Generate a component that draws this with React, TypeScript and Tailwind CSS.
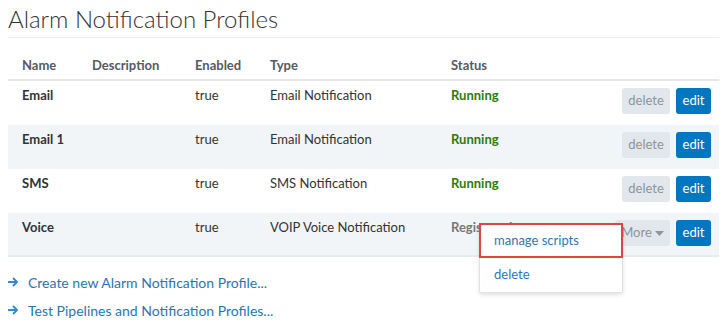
import React from 'react';

interface Profile {
  name: string;
  description: string;
  enabled: string;
  type: string;
  status: string;
  running: boolean;
}

const PROFILES: Profile[] = [
  { name: 'Email', description: '', enabled: 'true', type: 'Email Notification', status: 'Running', running: true },
  { name: 'Email 1', description: '', enabled: 'true', type: 'Email Notification', status: 'Running', running: true },
  { name: 'SMS', description: '', enabled: 'true', type: 'SMS Notification', status: 'Running', running: true },
  { name: 'Voice', description: '', enabled: 'true', type: 'VOIP Voice Notification', status: 'Registered', running: false },
];

const COLS = 'grid grid-cols-[70px_103px_75px_181px_1fr_auto]';

const ArrowRight = () => (
  <svg width="11" height="10" viewBox="0 0 11 10" className="shrink-0">
    <path d="M0.5 5h8M5.5 1.5L9 5l-3.5 3.5" fill="none" stroke="#2f88d1" strokeWidth="1.8" strokeLinecap="round" strokeLinejoin="round" />
  </svg>
);

const App: React.FC = () => {
  return (
    <div className="w-[727px] h-[336px] bg-white px-2 text-[#333] overflow-hidden" style={{ fontFamily: 'Lato, "Liberation Sans", sans-serif' }}>
      {/* Header */}
      <h1 className="pt-[4px] pb-[3px] text-[24px] leading-[30px] font-light text-[#333] border-b border-[#eeeeee]">
        Alarm Notification Profiles
      </h1>

      {/* Table */}
      <div className="mt-[18px] text-[13px]">
        <div className={`${COLS} pl-[14px] h-[25px] border-b-2 border-[#e6e9ec] font-bold text-[#555a66]`}>
          <div>Name</div>
          <div>Description</div>
          <div>Enabled</div>
          <div>Type</div>
          <div>Status</div>
          <div />
        </div>

        {PROFILES.map((p, i) => (
          <div
            key={p.name}
            className={`${COLS} relative pl-[14px] pr-[8px] h-[44px] ${i % 2 === 1 ? 'bg-[#f2f5f8]' : 'bg-white'} ${
              i === PROFILES.length - 1 ? 'border-b-2 border-[#e6ebf0]' : ''
            }`}
          >
            <div className="pt-[5px] font-bold">{p.name}</div>
            <div className="pt-[5px]">{p.description}</div>
            <div className="pt-[5px]">{p.enabled}</div>
            <div className="pt-[5px]">{p.type}</div>
            <div className={`pt-[5px] font-bold ${p.running ? 'text-[#2a7d0a]' : 'text-[#777]'}`}>{p.status}</div>
            <div className="flex items-start gap-[6px] pt-[7px]">
              {p.running ? (
                <button className="h-[26px] w-[48px] rounded-[3px] bg-[#e2e7ec] text-[#8c949c] text-[13px]">delete</button>
              ) : (
                <button className="h-[26px] w-[55px] rounded-[3px] bg-[#e2e7ec] text-[#8c949c] text-[13px] flex items-center justify-center gap-[3px]">
                  More
                  <svg width="9" height="5" viewBox="0 0 9 5">
                    <path d="M0 0h9L4.5 5z" fill="#8c949c" />
                  </svg>
                </button>
              )}
              <button className="h-[26px] w-[35px] rounded-[3px] bg-[#0077c0] text-white text-[13px]">edit</button>
            </div>

            {!p.running && (
              <div className="absolute left-[471px] top-[10px] w-[144px] bg-white border border-[#dfe3e7] rounded-[2px] shadow-[0_2px_4px_rgba(0,0,0,0.12)] z-10 text-[13px] text-[#2b78c0]">
                <div className="h-[35px] border-2 border-[#e24444] flex items-center pl-[13px] -mx-px -mt-px">manage scripts</div>
                <div className="h-[34px] flex items-center pl-[14px]">delete</div>
              </div>
            )}
          </div>
        ))}
      </div>

      {/* Links */}
      <div className="mt-[17px] flex flex-col gap-[12px] text-[14px] text-[#2b74b8]">
        <a className="flex items-center gap-[9px] h-[16px]">
          <ArrowRight />
          Create new Alarm Notification Profile...
        </a>
        <a className="flex items-center gap-[9px] h-[16px]">
          <ArrowRight />
          Test Pipelines and Notification Profiles...
        </a>
      </div>
    </div>
  );
};

export default App;
